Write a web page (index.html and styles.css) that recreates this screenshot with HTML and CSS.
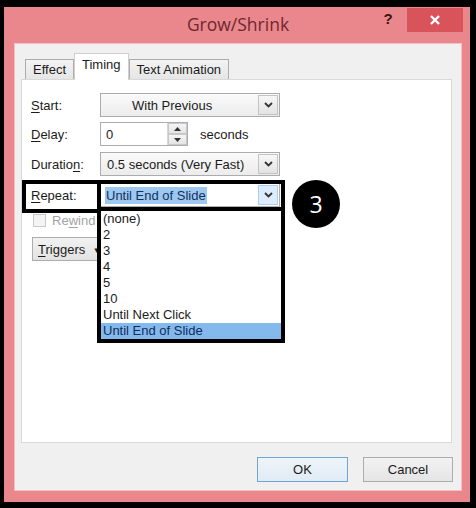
FILE: index.html
```html
<html>
    <head>
        <link rel="stylesheet" href="styles.css">
    </head>
    <body>
        <div class="window">
            <div class="titlebar">
                <span></span>
                <div class="title">Grow/Shrink</div>
                <div class="controls">
                    <span class="help">?</span>
                    <span class="close">
                        <svg width="12" height="12" viewBox="0 0 12 12">
                            <path d="M2 2 L10 10 M10 2 L2 10" stroke="#fff" stroke-width="2.4" fill="none"/>
                        </svg>
                    </span>
                </div>
            </div>

            <div class="client">
                <div class="tabs">
                    <div class="tab">Effect</div>
                    <div class="tab active">Timing</div>
                    <div class="tab">Text Animation</div>
                </div>

                <div class="panel">
                    <div class="row">
                        <label><u>S</u>tart:</label>
                        <div class="combo">
                            <span class="value centered">With Previous</span>
                            <span class="arrow">
                                <svg width="9" height="6" viewBox="0 0 9 6"><path d="M1 1 L4.5 4.5 L8 1" stroke="#333" stroke-width="1.8" fill="none"/></svg>
                            </span>
                        </div>
                    </div>
                    <div class="row row-delay">
                        <label><u>D</u>elay:</label>
                        <div class="spinbox">
                            <span class="value">0</span>
                            <span class="spin">
                                <span class="spin-half">
                                    <svg width="7" height="4" viewBox="0 0 7 4"><path d="M0 4 L3.5 0 L7 4 Z" fill="#333"/></svg>
                                </span>
                                <span class="spin-half">
                                    <svg width="7" height="4" viewBox="0 0 7 4"><path d="M0 0 L3.5 4 L7 0 Z" fill="#333"/></svg>
                                </span>
                            </span>
                        </div>
                        <span class="unit">seconds</span>
                    </div>
                    <div class="row row-duration">
                        <label>Duratio<u>n</u>:</label>
                        <div class="combo">
                            <span class="value">0.5 seconds (Very Fast)</span>
                            <span class="arrow">
                                <svg width="9" height="6" viewBox="0 0 9 6"><path d="M1 1 L4.5 4.5 L8 1" stroke="#333" stroke-width="1.8" fill="none"/></svg>
                            </span>
                        </div>
                    </div>
                    <div class="row row-repeat">
                        <label><u>R</u>epeat:</label>
                        <div class="combo open">
                            <span class="value"><span class="selected">Until End of Slide</span></span>
                            <span class="arrow hot">
                                <svg width="9" height="6" viewBox="0 0 9 6"><path d="M1 1 L4.5 4.5 L8 1" stroke="#333" stroke-width="1.8" fill="none"/></svg>
                            </span>
                        </div>
                    </div>
                    <div class="row row-rewind">
                        <span class="checkbox"></span>
                        <span class="disabled">Re<u>w</u>ind</span>
                    </div>
                    <div class="row row-triggers">
                        <button class="triggers"><u>T</u>riggers <span class="tri">&#9660;</span></button>
                    </div>

                    <!-- callout boxes and the open list -->
                    <div class="mark mark-label"></div>
                    <div class="mark mark-combo"></div>
                    <ul class="dropdown">
                        <li>(none)</li>
                        <li>2</li>
                        <li>3</li>
                        <li>4</li>
                        <li>5</li>
                        <li>10</li>
                        <li>Until Next Click</li>
                        <li class="current">Until End of Slide</li>
                    </ul>
                    <div class="badge">3</div>
                </div>

                <div class="buttons">
                    <button class="btn default">OK</button>
                    <button class="btn">Cancel</button>
                </div>
            </div>
        </div>
    </body>
</html>
```

FILE: styles.css
```css
*{
  margin:0px;
  padding:0px;
  box-sizing:border-box;
}

body{
  background:#000;
  padding:7px 6px 6px 4px;
  font-family:"Liberation Sans", Arial, sans-serif;
  font-size:13px;
  color:#1b1b1b;
}

u{
  text-decoration:underline;
  text-underline-offset:2px;
}

/* window frame */
.window{
  width:466px;
  height:495px;
  background:#e9878c;
  padding:0px 8px 11px 10px;
  display:flex;
  flex-direction:column;
}

.titlebar{
  height:36px;
  display:grid;
  grid-template-columns:1fr auto 1fr;
  align-items:center;
}

.title{
  font-family:"Open Sans", sans-serif;
  font-size:17.5px;
  color:#6e272c;
  padding-bottom:2px;
}

.controls{
  display:flex;
  justify-content:flex-end;
  align-self:start;
  margin-top:1px;
  margin-right:-1px;
}

.help{
  width:26px;
  margin-right:6px;
  text-align:center;
  font-weight:bold;
  font-size:15px;
  line-height:22px;
  color:#3a1416;
}

.close{
  width:56px;
  height:24px;
  background:#d8535a;
  display:flex;
  justify-content:center;
  align-items:center;
}

.client{
  flex:1;
  background:#f0f0f0;
  border:1px solid #f5c0c2;
  padding:9px 9px 0px 6px;
  display:flex;
  flex-direction:column;
}

/* tabs */
.tabs{
  display:flex;
  align-items:flex-end;
  margin-left:4px;
  height:26px;
  position:relative;
  z-index:1;
}

.tab{
  height:20px;
  line-height:19px;
  padding:0px 7px;
  border:1px solid #acacac;
  border-bottom:none;
  background:linear-gradient(#f3f3f3, #e6e6e6);
}

.tab.active{
  height:27px;
  line-height:22px;
  padding:0px 7px;
  background:#fff;
  margin-bottom:-1px;
  border-color:#d0d0d0;
}

.panel{
  height:364px;
  background:#fff;
  border:1px solid #d9d9d9;
  padding:13px 0px 0px 9px;
  position:relative;
}

.row{
  display:flex;
  align-items:center;
  height:24px;
  margin-bottom:5px;
}
.row-delay{
  margin-bottom:6px;
}
.row-duration{
  margin-bottom:7px;
}
.row-repeat{
  margin-bottom:7px;
}
.row-rewind{
  height:13px;
  margin-bottom:10px;
  padding-left:2px;
}

label{
  width:69px;
}

/* combo boxes */
.combo{
  width:180px;
  height:24px;
  border:1px solid #acacac;
  background:linear-gradient(#fafafa, #ececec);
  display:flex;
  align-items:center;
  padding:1px;
}

.combo .value{
  flex:1;
  padding-left:5px;
  white-space:nowrap;
}
.combo .value.centered{
  padding-left:30px;
}

.arrow{
  width:20px;
  height:20px;
  border:1px solid #c3c3c3;
  background:linear-gradient(#f7f7f7, #e3e3e3);
  display:flex;
  justify-content:center;
  align-items:center;
}

.combo.open{
  background:#fff;
}
.combo.open .value{
  padding-left:3px;
}
.selected{
  background:#9ec8f0;
  color:#12325e;
  padding:1px 1px;
}
.arrow.hot{
  background:#dcecfc;
  border-color:#a8cdf0;
}

/* spin box */
.spinbox{
  width:88px;
  height:24px;
  border:1px solid #abadb3;
  background:#fff;
  display:flex;
  align-items:center;
}
.spinbox .value{
  flex:1;
  padding-left:5px;
}
.spin{
  width:20px;
  height:22px;
  display:flex;
  flex-direction:column;
  border-left:1px solid #d6d6d6;
}
.spin-half{
  flex:1;
  display:flex;
  justify-content:center;
  align-items:center;
  background:linear-gradient(#f5f5f5, #e4e4e4);
  border:1px solid #c8c8c8;
}
.unit{
  margin-left:12px;
}

/* rewind + triggers */
.checkbox{
  width:13px;
  height:13px;
  border:1px solid #c9c9c9;
  background:#f4f4f4;
  margin-right:6px;
}
.disabled{
  color:#a3a3a3;
}

.triggers{
  font-family:"Liberation Sans", Arial, sans-serif;
  font-size:13px;
  color:#1b1b1b;
  width:80px;
  height:24px;
  margin-left:1px;
  border:1px solid #adadad;
  background:linear-gradient(#f2f2f2, #e2e2e2);
  text-align:left;
  padding-left:5px;
}
.tri{
  font-size:8px;
  margin-left:4px;
  vertical-align:1px;
}

/* callouts over the timing page */
.mark{
  position:absolute;
  border:4px solid #000;
}
.mark-label{
  left:0px;
  top:100px;
  width:79px;
  height:33px;
}
.mark-combo{
  left:75px;
  top:100px;
  width:188px;
  height:32px;
}

.dropdown{
  position:absolute;
  left:75px;
  top:127px;
  width:188px;
  height:136px;
  border:4px solid #000;
  background:#fff;
  list-style:none;
}
.dropdown li{
  height:16px;
  line-height:16px;
  padding-left:2px;
  white-space:nowrap;
}
.dropdown li.current{
  background:#84b9ee;
  color:#0f2d5c;
}

.badge{
  position:absolute;
  left:270px;
  top:100px;
  width:48px;
  height:48px;
  border-radius:50%;
  background:#000;
  color:#fff;
  font-family:"Open Sans", sans-serif;
  font-size:23px;
  display:flex;
  justify-content:center;
  align-items:center;
}

/* dialog buttons */
.buttons{
  display:flex;
  justify-content:flex-end;
  gap:15px;
  margin-top:14px;
  margin-right:-1px;
}

.btn{
  font-family:"Liberation Sans", Arial, sans-serif;
  font-size:13px;
  color:#1b1b1b;
  width:90px;
  height:25px;
  border:1px solid #acacac;
  background:linear-gradient(#f2f2f2, #e5e5e5);
}
.btn.default{
  width:91px;
  border-color:#6ea6d6;
  background:linear-gradient(#eef4fa, #e0ebf5);
}
```
